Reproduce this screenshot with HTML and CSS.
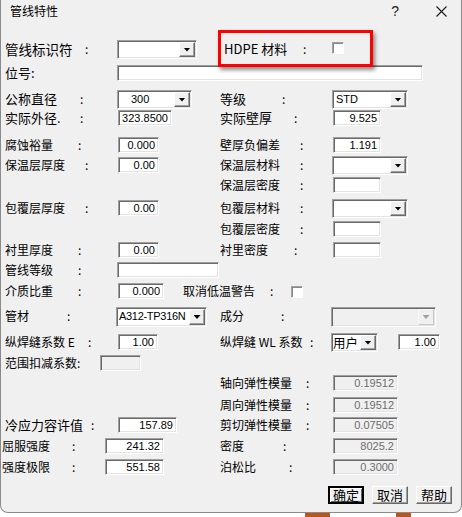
FILE: index.html
```html
<!DOCTYPE html>
<html>
<head lang="zh-CN">
<meta charset="UTF-8">
<title>管线特性</title>
<link rel="stylesheet" href="styles.css">
</head>
<body>
<div class="win">
    <div class="title">
        <span class="cap">管线特性</span>
        <span class="help">?</span>
        <svg class="close" width="11" height="11" viewBox="0 0 11 11"><path d="M0.5 0.5L10.5 10.5M10.5 0.5L0.5 10.5" stroke="#1a1a1a" stroke-width="1.1" fill="none"/></svg>
    </div>
    <div class="form">
        <!-- 1 -->
        <div class="row">
            <div class="l">
                <label class="lb"><span class="tx w80 s135">管线标识符</span>:</label>
                <div class="cb" style="width:80px"><span class="v"></span><span class="dd"></span></div>
            </div>
            <div class="r hdpe">
                <label class="lb"><span class="tx w83 s13 pad">HDPE 材料</span>:</label>
                <span class="ck"></span>
            </div>
        </div>
        <!-- 2 -->
        <div class="row">
            <div class="f">
                <label class="lb"><span class="s13">位号:</span></label>
                <input class="in" style="width:306px" value="">
            </div>
        </div>
        <!-- 3 -->
        <div class="row">
            <div class="l">
                <label class="lb"><span class="tx w75 s13">公称直径</span>:</label>
                <div class="cb" style="width:75px"><span class="v ind">300</span><span class="dd"></span></div>
            </div>
            <div class="r">
                <label class="lb"><span class="tx w62 s13">等级</span>:</label>
                <div class="cb sh" style="width:76px"><span class="v">STD</span><span class="dd"></span></div>
            </div>
        </div>
        <!-- 4 -->
        <div class="row">
            <div class="l">
                <label class="lb"><span class="tx w75 s13">实际外径.</span>:</label>
                <input class="in nx" style="width:54px" value="323.8500">
            </div>
            <div class="r">
                <label class="lb"><span class="tx w74 s13">实际壁厚</span>:</label>
                <input class="in" style="width:48px" value="9.525">
            </div>
        </div>
        <!-- 5 -->
        <div class="row">
            <div class="l">
                <label class="lb"><span class="tx w73">腐蚀裕量</span>:</label>
                <input class="in nx" style="width:41px" value="0.000">
            </div>
            <div class="r">
                <label class="lb"><span class="tx w80">壁厚负偏差</span>:</label>
                <input class="in" style="width:48px" value="1.191">
            </div>
        </div>
        <!-- 6 -->
        <div class="row">
            <div class="l">
                <label class="lb"><span class="tx w80">保温层厚度</span>:</label>
                <input class="in nx" style="width:41px" value="0.00">
            </div>
            <div class="r">
                <label class="lb"><span class="tx w80">保温层材料</span>:</label>
                <div class="cb sh" style="width:76px"><span class="v"></span><span class="dd"></span></div>
            </div>
        </div>
        <!-- 7 -->
        <div class="row">
            <div class="l"></div>
            <div class="r">
                <label class="lb"><span class="tx w80">保温层密度</span>:</label>
                <input class="in" style="width:48px" value="">
            </div>
        </div>
        <!-- 8 -->
        <div class="row">
            <div class="l">
                <label class="lb"><span class="tx w80">包覆层厚度</span>:</label>
                <input class="in nx" style="width:41px" value="0.00">
            </div>
            <div class="r">
                <label class="lb"><span class="tx w80">包覆层材料</span>:</label>
                <div class="cb sh" style="width:76px"><span class="v"></span><span class="dd"></span></div>
            </div>
        </div>
        <!-- 9 -->
        <div class="row">
            <div class="l"></div>
            <div class="r">
                <label class="lb"><span class="tx w80">包覆层密度</span>:</label>
                <input class="in" style="width:48px" value="">
            </div>
        </div>
        <!-- 10 -->
        <div class="row">
            <div class="l">
                <label class="lb"><span class="tx w73">衬里厚度</span>:</label>
                <input class="in nx" style="width:41px" value="0.00">
            </div>
            <div class="r">
                <label class="lb"><span class="tx w74">衬里密度</span>:</label>
                <input class="in" style="width:48px" value="">
            </div>
        </div>
        <!-- 11 -->
        <div class="row">
            <div class="l">
                <label class="lb"><span class="tx w73">管线等级</span>:</label>
                <input class="in" style="width:102px" value="">
            </div>
        </div>
        <!-- 12 -->
        <div class="row">
            <div class="f">
                <label class="lb"><span class="tx w73">介质比重</span>:</label>
                <input class="in nx" style="width:46px" value="0.000">
                <label class="lb warn"><span class="tx w87">取消低温警告</span>:</label>
                <span class="ck"></span>
            </div>
        </div>
        <!-- 13 -->
        <div class="row">
            <div class="l">
                <label class="lb"><span class="tx w62">管材</span>:</label>
                <div class="cb tall sh" style="width:91px"><span class="v tight">A312-TP316N</span><span class="dd"></span></div>
            </div>
            <div class="r">
                <label class="lb"><span class="tx w61">成分</span>:</label>
                <div class="cb tall dis sh2" style="width:105px"><span class="v"></span><span class="dd"></span></div>
            </div>
        </div>
        <!-- 14 -->
        <div class="row">
            <div class="l">
                <label class="lb"><span class="tx w83">纵焊缝系数 E</span>:</label>
                <input class="in nx" style="width:40px" value="1.00">
            </div>
            <div class="r">
                <label class="lb"><span class="tx w90">纵焊缝 WL 系数</span>:</label>
                <div class="cb sh2" style="width:47px"><span class="v cn">用户</span><span class="dd"></span></div>
                <input class="in wl" style="width:42px" value="1.00">
            </div>
        </div>
        <!-- 15 -->
        <div class="row">
            <div class="l">
                <label class="lb k95"><span>范围扣减系数:</span></label>
                <input class="in dis" style="width:41px" value="">
            </div>
        </div>
        <!-- 16 -->
        <div class="row">
            <div class="l"></div>
            <div class="r">
                <label class="lb"><span class="tx w86">轴向弹性模量</span>:</label>
                <input class="in dis" style="width:65px" value="0.19512">
            </div>
        </div>
        <!-- 17 -->
        <div class="row">
            <div class="l"></div>
            <div class="r">
                <label class="lb"><span class="tx w86">周向弹性模量</span>:</label>
                <input class="in dis" style="width:65px" value="0.19512">
            </div>
        </div>
        <!-- 18 -->
        <div class="row">
            <div class="l">
                <label class="lb"><span class="tx w86 s13">冷应力容许值</span>:</label>
                <input class="in nx" style="width:59px" value="157.89">
            </div>
            <div class="r">
                <label class="lb"><span class="tx w86">剪切弹性模量</span>:</label>
                <input class="in dis" style="width:65px" value="0.07505">
            </div>
        </div>
        <!-- 19 -->
        <div class="row">
            <div class="l">
                <label class="lb k103"><span class="tx w70">屈服强度</span>:</label>
                <input class="in" style="width:59px" value="241.32">
            </div>
            <div class="r">
                <label class="lb"><span class="tx w63">密度</span>:</label>
                <input class="in dis" style="width:65px" value="8025.2">
            </div>
        </div>
        <!-- 20 -->
        <div class="row">
            <div class="l">
                <label class="lb k103"><span class="tx w70">强度极限</span>:</label>
                <input class="in" style="width:59px" value="551.58">
            </div>
            <div class="r">
                <label class="lb"><span class="tx w69">泊松比</span>:</label>
                <input class="in dis" style="width:65px" value="0.3000">
            </div>
        </div>
        <!-- buttons -->
        <div class="btns">
            <button class="btn def">确定</button>
            <button class="btn">取消</button>
            <button class="btn">帮助</button>
        </div>
    </div>
</div>
<div class="desk"><span class="o1"></span><span class="o2"></span></div>
</body>
</html>
```

FILE: styles.css
```css
*{margin:0;padding:0;box-sizing:border-box;}
body{
	width:462px;
	height:517px;
	overflow:hidden;
	background:#fff;
	font-family:"Noto Sans CJK SC","Liberation Sans",sans-serif;
	font-size:12px;
	color:#000;
}
.win{
	width:462px;
	height:513px;
	background:#f0f0f0;
	border:1px solid #8a8a8a;
	border-top:none;
	border-radius:0 0 8px 8px;
}
.title{display:flex;align-items:center;height:22px;padding:0 14px 0 9px;}
.cap{font-size:12px;line-height:14px;}
.help{margin-left:auto;margin-right:37px;font:14px "Liberation Sans",sans-serif;color:#1a1a1a;}
.close{display:block;}

.form{
	display:grid;
	grid-template-rows:24px 26px 19px 27px 20px 20px 23px 21px 21px 20px 21px 25px 26px 21px 20px 22px 20px 21px 21px 27px auto;
	padding:19px 0 0 4px;
}
.row{display:flex;align-items:flex-start;}
.f,.l,.r{display:flex;align-items:flex-start;}
.l{width:215px;flex:none;}
.r{flex:1;}

.lb{display:flex;flex:none;width:112px;line-height:16px;white-space:nowrap;}
.r .lb{width:113px;}
.tx{display:inline-block;}
.s13{font-size:13px;}
.s135{font-size:13.5px;}
.pad{padding-left:4px;}
.w61{width:61px;}
.w62{width:62px;}
.w63{width:63px;}
.w69{width:69px;}
.w70{width:70px;}
.w73{width:73px;}
.w74{width:74px;}
.w75{width:75px;}
.w80{width:80px;}
.w83{width:83px;}
.w86{width:86px;}
.w87{width:87px;}
.w90{width:90px;}
.k95{width:95px;}
.k103{width:103px;margin-left:-3px;}
.lb.warn{width:109px;margin-left:19px;}

/* sunken edit */
.in{
	display:block;
	height:16px;
	border:1px solid;
	border-color:#a0a0a0 #fff #fff #a0a0a0;
	box-shadow:inset 1px 1px #696969,inset -1px -1px #e3e3e3;
	background:#fff;
	font:11px/14px "Liberation Sans",sans-serif;
	color:#000;
	text-align:right;
	padding:0 3px 0 2px;
	outline:none;
}
.in.nx{margin-left:1px;}
.in.dis{background:#f0f0f0;color:#6d6d6d;}
.in.wl{margin-left:20px;}

/* combo */
.cb{
	display:flex;
	height:19px;
	margin-top:-1px;
	border:1px solid;
	border-color:#a0a0a0 #fff #fff #a0a0a0;
	box-shadow:inset 1px 1px #696969,inset -1px -1px #e3e3e3;
	background:#fff;
	padding:1px;
}
.cb.tall{height:20px;}
.cb.sh{margin-left:-1px;}
.cb.sh2{margin-left:-2px;}
.cb .v{flex:1;min-width:0;overflow:hidden;white-space:nowrap;font:11px/15px "Liberation Sans",sans-serif;padding-left:2px;}
.cb .v.ind{padding-left:12px;}
.cb .v.tight{padding-left:1px;letter-spacing:-0.3px;}
.cb .v.cn{font:12.5px/15px "Noto Sans CJK SC",sans-serif;padding-left:0;overflow:visible;}
.cb .dd{
	flex:none;
	width:16px;
	display:flex;
	align-items:center;
	justify-content:center;
	background:#f0f0f0;
	border:1px solid;
	border-color:#fff #696969 #696969 #fff;
	box-shadow:inset -1px -1px #a0a0a0;
}
.cb .dd::after{
	content:"";
	width:7px;
	height:4px;
	background:#000;
	clip-path:polygon(0 0,100% 0,50% 100%);
}
.cb.dis{background:#f0f0f0;}
.cb.dis .dd{border-color:#f8f8f8 #c8c8c8 #c8c8c8 #f8f8f8;box-shadow:none;}
.cb.dis .dd::after{background:#a0a0a0;}

/* checkbox */
.ck{
	display:block;
	width:12px;
	height:12px;
	margin-top:1px;
	margin-left:-1px;
	background:#fff;
	border:1px solid;
	border-color:#a0a0a0 #fff #fff #a0a0a0;
	box-shadow:inset 1px 1px #8a8a8a;
}
.warn + .ck{margin-top:3px;}

/* red mark */
.hdpe{position:relative;}
.hdpe::before{
	content:"";
	position:absolute;
	left:-2px;
	top:-11px;
	width:149px;
	height:31px;
	border:3px solid #f00;
	box-shadow:2px 3px 4px rgba(0,0,0,.45);
}

/* buttons */
.btns{display:flex;justify-content:flex-end;gap:8px;padding-right:9px;}
.btn{
	width:36px;
	height:18px;
	font:13px/14px "Noto Sans CJK SC",sans-serif;
	background:#f0f0f0;
	border:1px solid;
	border-color:#fff #696969 #696969 #fff;
	box-shadow:inset -1px -1px #a0a0a0;
}
.btn.def{border:2px solid #000;box-shadow:inset 1px 1px #fff,inset -1px -1px #696969;}

.desk{display:flex;height:4px;}
.o1{width:25px;margin-left:305px;background:#b8561e;}
.o2{width:15px;margin-left:66px;background:#b8561e;}
```
